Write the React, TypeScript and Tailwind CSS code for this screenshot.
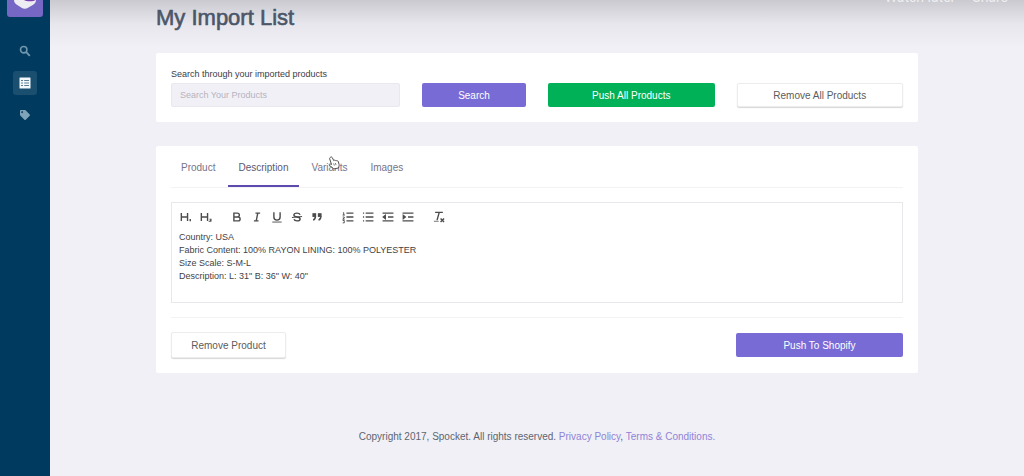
import type { ReactNode } from "react";
import { FaTag } from "react-icons/fa";

function ListIcon() {
  return (
    <svg viewBox="0 0 12 12" className="size-3" aria-hidden="true">
      <rect x="0.5" y="0.5" width="11" height="11" rx="0.5" fill="#f4f8fb" />
      <path d="M2 3.500h2M2 6h2M2 8.500h2M5.200 3.500H10M5.200 6H10M5.200 8.500H10" stroke="#4a6f8a" strokeWidth="0.900" />
    </svg>
  );
}

function SearchIcon() {
  return (
    <svg viewBox="0 0 12 12" className="size-3" fill="none" stroke="currentColor" aria-hidden="true">
      <circle cx="4.700" cy="4.700" r="3.200" strokeWidth="1.600" />
      <path d="M7.200 7.200l3.600 3.600" strokeWidth="1.900" />
    </svg>
  );
}

function Sidebar() {
  return (
    <aside className="flex w-[50px] shrink-0 flex-col items-center bg-[#003a5f]">
      <a href="#" aria-label="Spocket" className="flex h-[17px] w-9 items-end justify-center overflow-hidden rounded-b-[3px] bg-[#7767c4]">
        <svg viewBox="0 0 36 17" className="h-[17px] w-9" aria-hidden="true">
          <path d="M7 0h22c0 2.500-1.500 4.200-4.500 5.800C22 7 20 8.800 17.800 8.800S13.500 7 11.500 5.800C8.500 4.200 7 2.500 7 0z" fill="#eeecf3" />
          <path d="M17 0h11.500c-1 .9-3 1.300-5.500 1.300-2.700 0-5-.4-6-1.300z" fill="#7a3fb0" />
        </svg>
      </a>
      <nav className="mt-[22px] flex flex-col items-center gap-2">
        <a href="#" aria-label="Search products" className="flex size-6 items-center justify-center text-[#6f97ae]">
          <SearchIcon />
        </a>
        <a href="#" aria-label="Import list" className="flex size-6 items-center justify-center rounded-[3px] bg-[#1a4f70]">
          <ListIcon />
        </a>
        <a href="#" aria-label="Orders" className="flex size-6 items-center justify-center text-[#7fa3b8]">
          <FaTag className="size-[10px]" />
        </a>
      </nav>
    </aside>
  );
}

const tools: { label: string; icon: ReactNode }[][] = [
  [
    {
      label: "Heading 1",
      icon: (
        <>
          <path d="M3 4v10M11 4v10M3 9h8" />
          <path d="M14.500 11.500v3" strokeWidth="1.800" />
        </>
      ),
    },
    {
      label: "Heading 2",
      icon: (
        <>
          <path d="M3 4v10M11 4v10M3 9h8" />
          <path d="M13.500 12h2v1.200l-1.700 1.300h2.200" strokeWidth="1.300" />
        </>
      ),
    },
  ],
  [
    {
      label: "Bold",
      icon: <path d="M5 4h4.500a2.500 2.500 0 0 1 0 5H5zM5 9h5.500a2.500 2.500 0 0 1 0 5H5z" />,
    },
    { label: "Italic", icon: <path d="M7 4h6M5 14h6M8 14l2-10" /> },
    {
      label: "Underline",
      icon: (
        <>
          <path d="M5 3v6a4 4 0 0 0 8 0V3" />
          <path d="M3 15.500h12" strokeWidth="1.200" />
        </>
      ),
    },
    {
      label: "Strike",
      icon: (
        <>
          <path d="M15.500 8.500l-13 1" strokeWidth="1.300" />
          <path d="M12.900 6C12.500 4.800 11 4 9 4 6.800 4 5 5.100 5 6.500 5 8 6.200 8.700 9 9s4 1 4 2.500S11.200 14 9 14c-2 0-3.500-.8-3.900-2" />
        </>
      ),
    },
    {
      label: "Quote",
      icon: (
        <g fill="currentColor">
          <rect x="4" y="5" width="3" height="3" />
          <rect x="11" y="5" width="3" height="3" />
          <path d="M7 8c0 4-3 5-3 5M14 8c0 4-3 5-3 5" />
        </g>
      ),
    },
  ],
  [
    {
      label: "Ordered list",
      icon: (
        <>
          <path d="M7 4h9M7 9h9M7 14h9" />
          <path d="M2.500 3.500h1v3M2 6.500h3M2.200 9h2v1.200l-2 1.600h2.600M2.200 13.500h2v3h-2" strokeWidth="1.200" />
        </>
      ),
    },
    {
      label: "Bullet list",
      icon: <path d="M6 4h10M6 9h10M6 14h10M2.500 4h1.500M2.500 9h1.500M2.500 14h1.500" />,
    },
    {
      label: "Outdent",
      icon: (
        <>
          <path d="M2 4h14M2 14h14M9 9h7" />
          <path d="M5.500 7v4l-2.500-2z" fill="currentColor" />
        </>
      ),
    },
    {
      label: "Indent",
      icon: (
        <>
          <path d="M2 4h14M2 14h14M9 9h7" />
          <path d="M3 7v4l2.500-2z" fill="currentColor" />
        </>
      ),
    },
  ],
  [
    {
      label: "Clear formatting",
      icon: (
        <>
          <path d="M4 3h10M6.500 13L9.300 3M11 11l4.500 4.500M15.500 11L11 15.500" />
          <path d="M2.500 14.500h6" strokeWidth="1" />
        </>
      ),
    },
  ],
];

function Toolbar() {
  return (
    <div className="flex gap-[11px] px-1 pt-1">
      {tools.map((group, i) => (
        <div key={i} className="flex">
          {group.map((tool) => (
            <button key={tool.label} type="button" aria-label={tool.label} className="flex size-5 items-center justify-center text-[#4c4c4c]">
              <svg viewBox="0 0 18 18" className="size-[14px]" fill="none" stroke="currentColor" strokeWidth="1.800" aria-hidden="true">
                {tool.icon}
              </svg>
            </button>
          ))}
        </div>
      ))}
    </div>
  );
}

function HandCursor() {
  return (
    <svg viewBox="0 0 14 16" className="h-[14px] w-3" aria-hidden="true">
      <path
        d="M3.200 1.200c.8-.5 1.500-.1 1.900.7l1.500 3.200c.6-.6 1.500-.5 1.900.1.600-.5 1.400-.3 1.800.3.700-.3 1.400 0 1.700.8l.9 3.200c.2 1 .1 1.700-.2 2.600l-.4 1.700-5.900 1.200-1-1.500-3.700-2.600c-.9-.8-.2-1.900.9-1.700l1.500.5-2.200-6.700c-.3-.8.600-1.500 1.300-1.800z"
        fill="#fff"
        stroke="#444"
        strokeWidth="1.100"
      />
      <path d="M6.600 8.500l.8 2.500M8.600 8l.8 2.500" stroke="#444" strokeWidth=".8" />
    </svg>
  );
}

const tabs = ["Product", "Description", "Variants", "Images"];

function Tabs() {
  return (
    <div role="tablist" className="flex gap-[3px] border-b border-[#f3f3f6]">
      {tabs.map((tab) => (
        <button
          key={tab}
          type="button"
          role="tab"
          aria-selected={tab === "Description"}
          className={
            tab === "Description"
              ? "h-[41px] border-b-2 border-[#5f4bb0] px-[10px] pt-1 text-[#5d5970]"
              : "relative h-[41px] border-b-2 border-transparent px-[10px] pt-1 text-[#77748a]"
          }
        >
          {tab}
          {tab === "Variants" && (
            <span className="absolute left-[26px] top-[10px]">
              <HandCursor />
            </span>
          )}
        </button>
      ))}
    </div>
  );
}

const purpleButton = "h-6 rounded-[2px] bg-[#796bd6] pt-px text-white";
const whiteButton = "rounded-[2px] border border-[#ececee] bg-white pt-px text-[#5c5c5c] shadow-[0_1px_1px_rgba(0,0,0,0.16)]";

const details = [
  "Country: USA",
  "Fabric Content: 100% RAYON LINING: 100% POLYESTER",
  "Size Scale: S-M-L",
  'Description: L: 31" B: 36" W: 40"',
];

export default function App() {
  return (
    <div className="relative flex min-h-screen overflow-hidden bg-[#f1f0f7] font-['Liberation_Sans',Arial,sans-serif] text-[10px] leading-3">
      <Sidebar />

      {/* Player shade along the top edge */}
      <div className="pointer-events-none absolute left-[50px] right-0 top-0 h-12 bg-linear-to-b from-black/16 via-black/4 to-transparent" />
      <div className="absolute -top-[11px] right-4 flex gap-[17px] font-[Roboto,sans-serif] text-[14px] leading-4 text-white/70">
        <span>Watch later</span>
        <span>Share</span>
      </div>

      <main className="flex-1">
        <div className="mx-auto max-w-[762px] pt-[5px]">
          <h1 className="relative text-[22px] leading-[26px] text-[#4b5668] [-webkit-text-stroke:0.6px_#4b5668]">My Import List</h1>

          <form
            className="mt-[22px] grid grid-cols-[11fr_5fr_8fr_8fr] items-end gap-[22px] rounded-[2px] bg-white px-[15px] py-[15px]"
            onSubmit={(e) => e.preventDefault()}
          >
            <div className="flex flex-col gap-[3px]">
              <label htmlFor="search" className="whitespace-nowrap text-[9px] text-[#3c3c46]">
                Search through your imported products
              </label>
              <input
                id="search"
                type="text"
                placeholder="Search Your Products"
                className="h-6 w-full rounded-[2px] border border-[#e9e8ef] bg-[#f1f0f6] px-2 text-[9px] placeholder:text-[#b5b3c0]"
              />
            </div>
            <button type="submit" className={purpleButton}>Search</button>
            <button type="button" className="h-6 rounded-[2px] bg-[#00b157] pt-px text-white">Push All Products</button>
            <button type="button" className={`h-6 ${whiteButton}`}>Remove All Products</button>
          </form>

          <section className="mt-6 rounded-[2px] bg-white px-[15px] pb-[15px]">
            <Tabs />
            <div className="mt-[14px] min-h-[101px] border border-[#e8e8ec]">
              <Toolbar />
              <div className="px-[7px] pt-1 text-[9px] leading-[13px] text-[#3f3f46]">
                {details.map((line) => (
                  <p key={line}>{line}</p>
                ))}
              </div>
            </div>
            <div className="mt-[14px] flex items-center justify-between border-t border-[#f3f3f6] pt-[14px]">
              <button type="button" className={`h-[26px] w-[115px] ${whiteButton}`}>Remove Product</button>
              <button type="button" className={`w-[167px] ${purpleButton}`}>Push To Shopify</button>
            </div>
          </section>

          <footer className="mt-[58px] pb-8 text-center text-[#5d6570]">
            Copyright 2017, Spocket. All rights reserved.{" "}
            <a href="#" className="text-[#8f83d6]">Privacy Policy</a>,{" "}
            <a href="#" className="text-[#8f83d6]">Terms &amp; Conditions.</a>
          </footer>
        </div>
      </main>
    </div>
  );
}
